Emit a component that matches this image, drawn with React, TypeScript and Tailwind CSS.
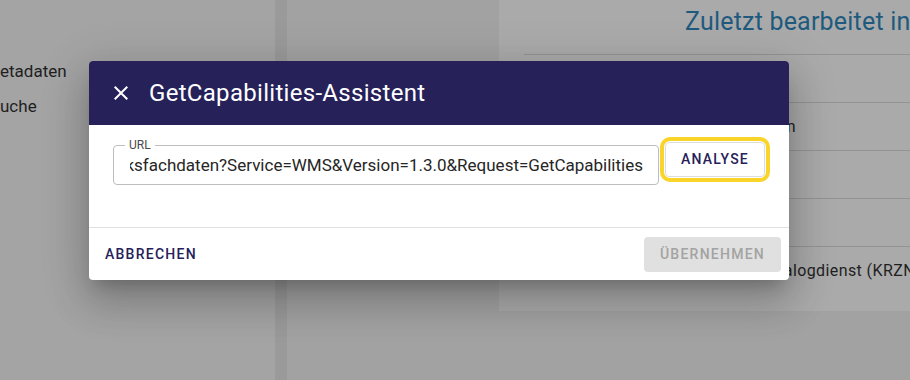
import React from "react";

const font = { fontFamily: "Roboto, 'Noto Sans', sans-serif" };

export default function App() {
  return (
    <div
      className="relative w-[910px] h-[380px] overflow-hidden flex bg-[#a2a2a2] text-[#1f1f1f]"
      style={font}
    >
      {/* left panel */}
      <div className="w-[275px] shrink-0 h-full bg-[#a4a4a4] flex flex-col pt-[60px] text-[17px]">
        <div className="h-[36px] leading-[22px]">etadaten</div>
        <div className="h-[36px] leading-[22px] -mt-[1px]">uche</div>
      </div>
      {/* divider */}
      <div className="w-[12px] shrink-0 h-full bg-[#9a9a9a]" />
      {/* middle */}
      <div className="w-[212px] shrink-0 h-full bg-[#a2a2a2]" />
      {/* right card */}
      <div className="w-[411px] shrink-0 h-[311px] bg-[#aaaaaa] flex flex-col overflow-hidden">
        <div className="h-[54px] pl-[186px] pt-[7px] text-[25px] leading-[30px] text-[#1f5a7e] whitespace-nowrap tracking-[0.2px]">
          Zuletzt bearbeitet in
        </div>
        <div className="ml-[25px] flex flex-col">
          <div className="h-px bg-[#939393]" />
          <div className="h-[47px]" />
          <div className="h-px bg-[#939393]" />
          <div className="h-[47px] flex items-center pl-[19px] text-[16px] whitespace-nowrap">
            Überschwemmungsgebiete Version
          </div>
          <div className="h-px bg-[#939393]" />
          <div className="h-[47px]" />
          <div className="h-px bg-[#939393]" />
          <div className="h-[47px]" />
          <div className="h-px bg-[#939393]" />
          <div className="h-[47px] flex items-center pl-[150px] text-[16px] tracking-[0.4px] whitespace-nowrap">
            Metadaten Katalogdienst (KRZN)
          </div>
        </div>
      </div>

      {/* dialog */}
      <div className="absolute left-[89px] top-[61px] w-[700px] h-[219px] bg-white rounded-[4px] overflow-hidden flex flex-col shadow-[0_11px_15px_-7px_rgba(0,0,0,0.2),0_24px_38px_3px_rgba(0,0,0,0.14),0_9px_46px_8px_rgba(0,0,0,0.12)]">
        <div className="h-[64px] bg-[#27215a] flex items-center pl-[20px] text-white">
          <svg width="24" height="24" viewBox="0 0 24 24" fill="currentColor">
            <path d="M19 6.41L17.59 5 12 10.59 6.41 5 5 6.41 10.59 12 5 17.59 6.41 19 12 13.41 17.59 19 19 17.59 13.41 12z" />
          </svg>
          <div className="ml-[16px] text-[24px] leading-[30px] tracking-[0.3px]">
            GetCapabilities-Assistent
          </div>
        </div>
        <div className="h-[102px] flex items-start pl-[24px] pr-[16px] pt-[20px]">
          <div className="relative w-[546px] h-[40px] border border-[#bdbdbd] rounded-[4px] flex items-center pl-[16px] pr-[15px]">
            <div className="absolute -top-[9px] left-[11px] bg-white px-[4px] text-[12px] leading-[16px] text-[#4a4a4a]">
              URL
            </div>
            <div className="flex-1 overflow-hidden flex justify-end whitespace-nowrap text-[17px] leading-[20px] text-[#262626]">
              https://www.wms.nrw.de/geobasis/Bezirksfachdaten?Service=WMS&amp;Version=1.3.0&amp;Request=GetCapabilities
            </div>
          </div>
          <div className="ml-[1px] -mt-[8px] border-4 border-[#f9d52c] rounded-[10px] p-px">
            <div className="w-[100px] h-[35px] border border-[#dcdcdc] rounded-[4px] flex items-center justify-center text-[14px] font-medium tracking-[1.25px] text-[#27215a]">
              ANALYSE
            </div>
          </div>
        </div>
        <div className="h-px bg-[#e0e0e0]" />
        <div className="flex-1 flex items-center justify-between pl-[16px] pr-[8px]">
          <div className="text-[14px] font-medium tracking-[1.25px] text-[#27215a]">
            ABBRECHEN
          </div>
          <div className="w-[137px] h-[35px] bg-[#e0e0e0] rounded-[4px] flex items-center justify-center text-[14px] font-medium tracking-[1.25px] text-[#a3a3a3]">
            ÜBERNEHMEN
          </div>
        </div>
      </div>
    </div>
  );
}
